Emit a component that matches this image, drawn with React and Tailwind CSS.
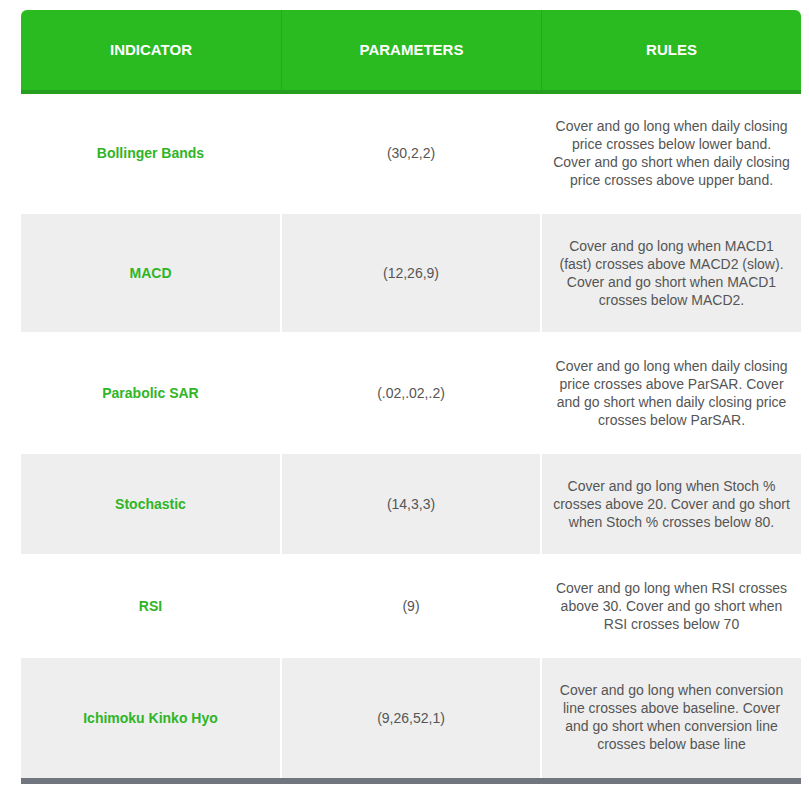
import React from 'react';

const rows = [
    {
        name: 'Bollinger Bands',
        params: '(30,2,2)',
        rules: ['Cover and go long when daily closing', 'price crosses below lower band.', 'Cover and go short when daily closing', 'price crosses above upper band.'],
    },
    {
        name: 'MACD',
        params: '(12,26,9)',
        rules: ['Cover and go long when MACD1', '(fast) crosses above MACD2 (slow).', 'Cover and go short when MACD1', 'crosses below MACD2.'],
    },
    {
        name: 'Parabolic SAR',
        params: '(.02,.02,.2)',
        rules: ['Cover and go long when daily closing', 'price crosses above ParSAR. Cover', 'and go short when daily closing price', 'crosses below ParSAR.'],
    },
    {
        name: 'Stochastic',
        params: '(14,3,3)',
        rules: ['Cover and go long when Stoch %', 'crosses above 20. Cover and go short', 'when Stoch % crosses below 80.'],
    },
    {
        name: 'RSI',
        params: '(9)',
        rules: ['Cover and go long when RSI crosses', 'above 30. Cover and go short when', 'RSI crosses below 70'],
    },
    {
        name: 'Ichimoku Kinko Hyo',
        params: '(9,26,52,1)',
        rules: ['Cover and go long when conversion', 'line crosses above baseline. Cover', 'and go short when conversion line', 'crosses below base line'],
    },
];

const App = () => {
    return (
        <div className="bg-white min-h-[791px] pt-[10px] pl-[21px]" style={{ fontFamily: '"Liberation Sans", Arial, sans-serif' }}>
            <div className="w-[780px]">
                {/* header */}
                <div className="grid grid-cols-[261px_260px_259px] h-[84px] bg-[#29bb20] border-b-4 border-[#249e1c] rounded-t-[6px] text-white font-bold text-[15px] uppercase">
                    <div className="flex items-center justify-center border-r border-[#23a71b]">Indicator</div>
                    <div className="flex items-center justify-center border-r border-[#23a71b]">Parameters</div>
                    <div className="flex items-center justify-center">Rules</div>
                </div>
                {/* body */}
                <div className="flex flex-col gap-[2px]">
                    {rows.map((r, i) => {
                        const bg = i % 2 === 1 ? 'bg-[#eeeeee]' : 'bg-white';
                        const last = i === rows.length - 1;
                        return (
                            <div key={r.name} className="grid grid-cols-[259px_258px_259px] gap-[2px] text-[14px] leading-[18px]">
                                <div className={`${bg} flex items-center justify-center font-bold text-[#2fb526]`}>{r.name}</div>
                                <div className={`${bg} flex items-center justify-center text-[#555555]`}>{r.params}</div>
                                <div className={`${bg} ${last ? 'pt-[23px] pb-[25px]' : 'py-[23px]'} px-[8px] text-center text-[#555555]`}>
                                    {r.rules.map((line, j) => (
                                        <div key={j} className="whitespace-nowrap">{line}</div>
                                    ))}
                                </div>
                            </div>
                        );
                    })}
                </div>
                <div className="h-[6px] bg-[#71757d]"></div>
            </div>
        </div>
    );
};

export default App;
